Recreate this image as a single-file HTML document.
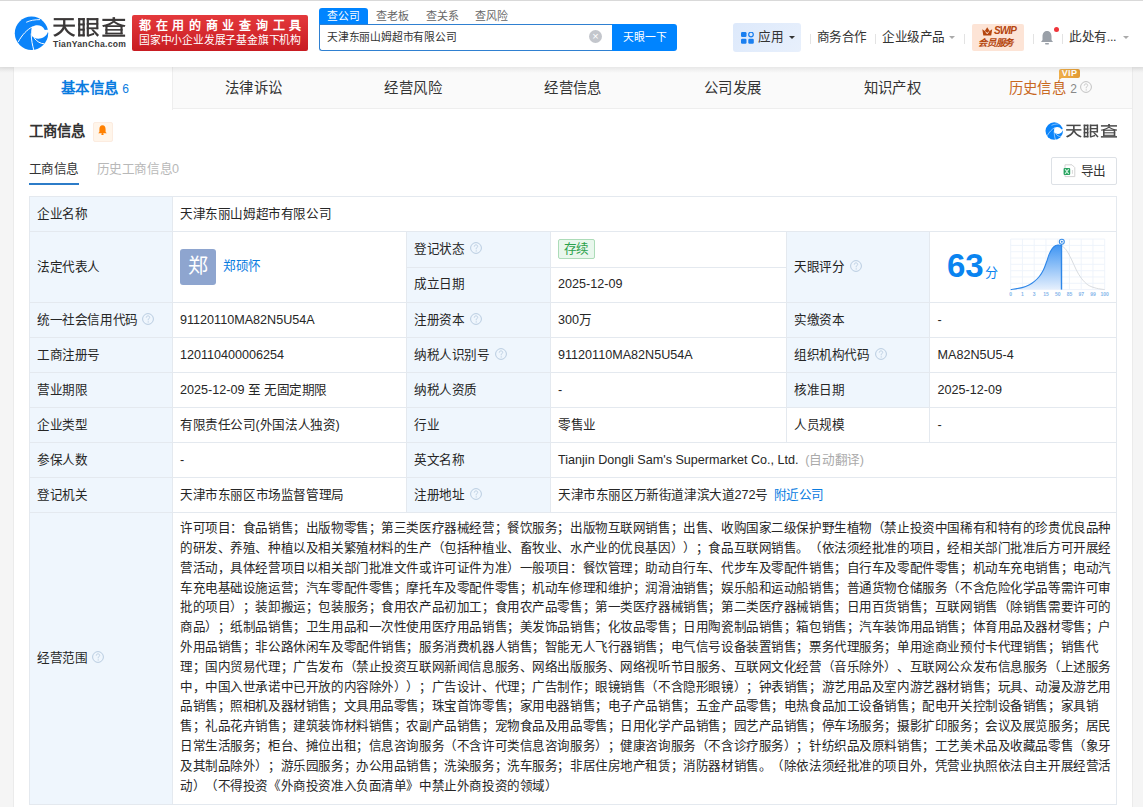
<!DOCTYPE html><html lang="zh-CN"><head><meta charset="utf-8"><style>
*{margin:0;padding:0;box-sizing:border-box;text-spacing-trim:space-all}
html,body{width:1143px;height:807px;overflow:hidden;background:#f5f5f5;font-family:"Liberation Sans", sans-serif;color:#333}
.a{position:absolute;white-space:nowrap}
.hdr{position:absolute;left:0;top:0;width:1143px;height:67px;background:#fff;border-top:1px solid #d9d9d9;box-shadow:0 1px 4px rgba(0,0,0,.06)}
.card{position:absolute;left:13px;top:67px;width:1120px;height:760px;background:#fff;border-left:1px solid #ebebeb;border-right:1px solid #ebebeb}
.t{font-size:12.6px;line-height:16px;color:#222}
.help{position:absolute;width:12px;height:12px} .help svg{display:block}
</style></head><body>
<div class="hdr"></div>
<svg class="a" style="left:12px;top:14px" width="40" height="40" viewBox="0 0 40 40"><circle cx="19.5" cy="19.2" r="16.7" fill="#0b84fa"/>
<path d="M20 13 C23.5 10.3 30 10.2 32.8 15.9 L40 15.2 L40 18.3 L35.8 18.3 C34 23.5 27.5 26.2 22.6 24 C20.6 23 19.3 21.6 19.2 19.8 C19.1 17 19.4 14.6 20 13 Z" fill="#fff"/>
<path d="M6.2 27.9 C10 21 15 15.5 20.6 12.8" stroke="#fff" stroke-width="1" fill="none"/>
<path d="M19.2 19.5 C19.3 26 20.4 31 21.9 36.5" stroke="#fff" stroke-width="1" fill="none"/>
<path d="M22.3 24.2 C25 27.6 28.5 29.6 32 29.8" stroke="#fff" stroke-width="1" fill="none"/>
<path d="M14.2 8.3 C18 6.4 23 5.6 28 5.6" stroke="#fff" stroke-width="0.9" fill="none"/></svg>
<svg class="a" style="left:48px;top:12px" width="82" height="38" viewBox="0 0 1143 530"><g fill="#3b3838">
<rect x="80" y="85" width="280" height="30"/><rect x="75" y="175" width="300" height="30"/><rect x="210" y="100" width="32" height="90"/>
<path d="M208 195 L242 195 C230 260 170 320 95 345 L72 318 C140 295 195 250 208 195Z"/>
<path d="M214 200 L246 200 C260 250 310 295 378 318 L360 345 C285 320 228 265 214 200Z"/>
<rect x="420" y="85" width="30" height="255"/><rect x="482" y="85" width="30" height="255"/>
<rect x="420" y="85" width="92" height="30"/><rect x="420" y="160" width="92" height="28"/><rect x="420" y="232" width="92" height="28"/><rect x="420" y="310" width="92" height="30"/>
<rect x="540" y="85" width="30" height="255"/><rect x="540" y="85" width="160" height="30"/><rect x="672" y="85" width="30" height="155"/>
<rect x="540" y="152" width="160" height="26"/><rect x="540" y="214" width="160" height="26"/>
<path d="M598 240 L632 240 L712 322 L688 345Z"/><path d="M548 322 L640 290 L645 318 L556 345Z"/>
<rect x="758" y="95" width="317" height="30"/><rect x="900" y="72" width="35" height="50"/>
<path d="M905 125 L935 132 C900 170 840 195 768 210 L755 185 C820 172 875 152 905 125Z"/>
<path d="M930 125 L900 132 C935 170 995 195 1067 210 L1080 185 C1015 172 960 152 930 125Z"/>
<rect x="800" y="185" width="30" height="125"/><rect x="1010" y="185" width="30" height="125"/>
<rect x="800" y="185" width="240" height="24"/><rect x="800" y="238" width="240" height="22"/><rect x="800" y="288" width="240" height="22"/>
<rect x="758" y="315" width="317" height="30"/></g></svg>
<div class="a" style="left:53px;top:39px;font-size:8.6px;line-height:10px;font-weight:bold;color:#3a3a3a;letter-spacing:0.3px">TianYanCha.com</div>
<div class="a" style="left:132px;top:15px;width:176px;height:36px;border-radius:2px;background:linear-gradient(#e4393c,#c81c22)"></div>
<div class="a" style="left:139px;top:19px;font-size:12px;line-height:14px;font-weight:bold;color:#fff;letter-spacing:4.7px">都在用的商业查询工具</div>
<div class="a" style="left:139px;top:33px;font-size:10.8px;line-height:14px;color:#fff;letter-spacing:-0.2px">国家中小企业发展子基金旗下机构</div>
<div class="a" style="left:319px;top:8px;width:49px;height:16px;background:#0084ff;border-radius:3px 3px 0 0"></div>
<div class="a" style="left:327px;top:8px;font-size:10.8px;line-height:16px;color:#fff;letter-spacing:0px">查公司</div>
<div class="a" style="left:376px;top:8px;font-size:11px;line-height:16px;color:#666">查老板</div>
<div class="a" style="left:426px;top:8px;font-size:11px;line-height:16px;color:#666">查关系</div>
<div class="a" style="left:475px;top:8px;font-size:11px;line-height:16px;color:#666">查风险</div>
<div class="a" style="left:319px;top:24px;width:295px;height:27px;border:1px solid #2f80d1;border-right:none;border-radius:0 0 0 3px;background:#fff"></div>
<div class="a" style="left:327px;top:29px;font-size:10.8px;line-height:16px;color:#333;letter-spacing:-0.2px">天津东丽山姆超市有限公司</div>
<div class="a" style="left:589px;top:29.5px;width:13px;height:13px;border-radius:50%;background:#c3c6cc;color:#fff;font-size:11px;line-height:13px;text-align:center">&#215;</div>
<div class="a" style="left:612px;top:24px;width:65px;height:27px;background:#0084ff;border-radius:0 3px 3px 0"></div>
<div class="a" style="left:623px;top:29px;font-size:10.8px;line-height:16px;color:#fff;letter-spacing:-0.1px">天眼一下</div>
<div class="a" style="left:733px;top:23px;width:68px;height:29px;border-radius:3px;background:linear-gradient(135deg,#dde9fb,#e8f0fc)"></div>
<svg class="a" style="left:741px;top:32px" width="13" height="12" viewBox="0 0 13 12">
<rect x="0" y="0" width="5.5" height="5" rx="1.2" fill="#1a7ff0"/><circle cx="10" cy="2.5" r="2.3" fill="none" stroke="#1a7ff0" stroke-width="1.2"/>
<rect x="0" y="6.8" width="5.5" height="5" rx="1.2" fill="#1a7ff0"/><rect x="7.3" y="6.8" width="5.5" height="5" rx="1.2" fill="#1a7ff0"/></svg>
<div class="a" style="left:758px;top:29px;font-size:12.6px;line-height:16px;color:#333;letter-spacing:-0.4px">应用</div>
<div class="a" style="left:788.5px;top:35.5px;width:0;height:0;border-left:3px solid transparent;border-right:3px solid transparent;border-top:3.5px solid #333"></div>
<div class="a" style="left:809.5px;top:34px;width:1px;height:10px;background:#e3e3e3"></div>
<div class="a" style="left:874.5px;top:34px;width:1px;height:10px;background:#e3e3e3"></div>
<div class="a" style="left:964px;top:34px;width:1px;height:10px;background:#e3e3e3"></div>
<div class="a" style="left:1032.5px;top:34px;width:1px;height:10px;background:#e3e3e3"></div>
<div class="a" style="left:1061.5px;top:34px;width:1px;height:10px;background:#e3e3e3"></div>
<div class="a" style="left:816.5px;top:29px;font-size:12.6px;line-height:16px;color:#333;letter-spacing:-0.4px">商务合作</div>
<div class="a" style="left:882px;top:29px;font-size:12.6px;line-height:16px;color:#333;letter-spacing:-0.4px">企业级产品</div>
<div class="a" style="left:949px;top:36px;width:0;height:0;border-left:3px solid transparent;border-right:3px solid transparent;border-top:3.5px solid #aaa"></div>
<div class="a" style="left:972px;top:24px;width:52px;height:27px;border-radius:2px;background:#fde4d6"></div>
<svg class="a" style="left:982px;top:27px" width="10.5" height="9" viewBox="0 0 10.5 9">
<path d="M0.3 2.2 L2.8 4 L5.2 0.3 L7.6 4 L10.2 2.2 L9.2 8.6 L1.3 8.6 Z" fill="#b5460f"/>
<path d="M3.6 4.6 L5.2 6.8 L6.8 4.6" stroke="#fde5d9" stroke-width="1" fill="none"/></svg>
<div class="a" style="left:994px;top:25px;font-size:10px;line-height:12px;color:#b5460f;font-weight:bold;font-style:italic;letter-spacing:-0.9px">SWIP</div>
<div class="a" style="left:978px;top:37px;font-size:9.4px;line-height:12px;color:#b5460f;font-weight:bold;font-style:italic;letter-spacing:-0.2px">会员服务</div>
<svg class="a" style="left:1040px;top:30px" width="14" height="15" viewBox="0 0 14 15">
<path d="M7 1 C3.8 1 2.5 3.5 2.5 6.5 L2.5 10 L1 12 L13 12 L11.5 10 L11.5 6.5 C11.5 3.5 10.2 1 7 1Z" fill="#9aa0a8"/>
<rect x="5" y="13" width="4" height="1.5" rx="0.7" fill="#9aa0a8"/></svg>
<div class="a" style="left:1053.5px;top:27px;width:5px;height:5px;border-radius:50%;background:#f0343a"></div>
<div class="a" style="left:1069px;top:29px;font-size:12.6px;line-height:16px;color:#333;letter-spacing:-0.4px">此处有...</div>
<div class="a" style="left:1123px;top:36px;width:0;height:0;border-left:3px solid transparent;border-right:3px solid transparent;border-top:3.5px solid #aaa"></div>
<div class="card"></div>
<div class="a" style="left:14px;top:67px;width:1118px;height:42px;background:#fafafa;border-bottom:1px solid #eee"></div>
<div class="a" style="left:14px;top:67px;width:159px;height:43px;background:#fff;border-right:1px solid #eee"></div>
<div class="a" style="left:61px;top:78.5px;font-size:14.4px;line-height:18px;color:#0a7cdf;font-weight:bold"><span style="letter-spacing:0.3px">基本信息</span> <span style="font-size:12px;font-weight:normal">6</span></div>
<div class="a" style="left:224.7px;top:78.5px;font-size:14.4px;line-height:18px;color:#333;letter-spacing:0.45px">法律诉讼</div>
<div class="a" style="left:384.4px;top:78.5px;font-size:14.4px;line-height:18px;color:#333;letter-spacing:0.45px">经营风险</div>
<div class="a" style="left:544.1px;top:78.5px;font-size:14.4px;line-height:18px;color:#333;letter-spacing:0.45px">经营信息</div>
<div class="a" style="left:703.9px;top:78.5px;font-size:14.4px;line-height:18px;color:#333;letter-spacing:0.45px">公司发展</div>
<div class="a" style="left:863.6px;top:78.5px;font-size:14.4px;line-height:18px;color:#333;letter-spacing:0.45px">知识产权</div>
<div class="a" style="left:1008.5px;top:78.5px;font-size:14.4px;line-height:18px;color:#c8681f"><span style="letter-spacing:0.45px">历史信息</span> <span style="font-size:12px;color:#888">2</span></div>
<div class="help" style="left:1079.5px;top:80.5px"><svg width="12" height="12" viewBox="0 0 12 12"><circle cx="6" cy="6" r="5.4" fill="none" stroke="#c2c2c2" stroke-width="1"/><path d="M4.3 4.6 C4.3 3.5 5 2.9 6 2.9 C7 2.9 7.7 3.5 7.7 4.4 C7.7 5.4 6.2 5.6 6.2 6.9 L6.2 7.3" fill="none" stroke="#c2c2c2" stroke-width="0.9"/><circle cx="6.2" cy="8.9" r="0.6" fill="#c2c2c2"/></svg></div>
<div class="a" style="left:1059px;top:69px;width:21px;height:9px;border-radius:2px 2px 2px 0;background:linear-gradient(90deg,#f0b04a,#e29a33);color:#fff;font-size:9px;line-height:9.5px;font-weight:bold;text-align:center;letter-spacing:0.3px">VIP</div>
<div class="a" style="left:1059px;top:77px;width:0;height:0;border-top:3px solid #eea843;border-right:4px solid transparent"></div>
<div class="a" style="left:0;top:67px;width:1143px;height:6px;background:linear-gradient(rgba(0,0,0,0.075),rgba(0,0,0,0))"></div>
<div class="a" style="left:28.5px;top:122px;font-size:14.4px;line-height:18px;font-weight:bold;color:#333">工商信息</div>
<div class="a" style="left:93px;top:122px;width:20px;height:20px;border:1px solid #fcece0;background:#fff5ea;border-radius:2px"></div>
<svg class="a" style="left:98.4px;top:124.6px" width="9" height="10.5" viewBox="0 0 9 10.5">
<path d="M4.5 0.3 C2.2 0.3 1.4 2.2 1.4 4.4 L1.4 6.9 L0.2 8.3 L8.8 8.3 L7.6 6.9 L7.6 4.4 C7.6 2.2 6.8 0.3 4.5 0.3 Z" fill="#ff8000"/>
<circle cx="4.5" cy="9.2" r="1.1" fill="#ff8000"/></svg>
<svg class="a" style="left:1044px;top:120.5px" width="21" height="21" viewBox="0 0 40 40"><circle cx="19.5" cy="19.2" r="16.7" fill="#0b84fa"/>
<path d="M20 13 C23.5 10.3 30 10.2 32.8 15.9 L40 15.2 L40 18.3 L35.8 18.3 C34 23.5 27.5 26.2 22.6 24 C20.6 23 19.3 21.6 19.2 19.8 C19.1 17 19.4 14.6 20 13 Z" fill="#fff"/>
<path d="M6.2 27.9 C10 21 15 15.5 20.6 12.8" stroke="#fff" stroke-width="1" fill="none"/>
<path d="M19.2 19.5 C19.3 26 20.4 31 21.9 36.5" stroke="#fff" stroke-width="1" fill="none"/>
<path d="M22.3 24.2 C25 27.6 28.5 29.6 32 29.8" stroke="#fff" stroke-width="1" fill="none"/>
<path d="M14.2 8.3 C18 6.4 23 5.6 28 5.6" stroke="#fff" stroke-width="0.9" fill="none"/></svg>
<svg class="a" style="left:1065.7px;top:124.3px" width="51.3" height="13.6" viewBox="72 72 1008 273" preserveAspectRatio="none"><g fill="#4a4a4a">
<rect x="80" y="85" width="280" height="30"/><rect x="75" y="175" width="300" height="30"/><rect x="210" y="100" width="32" height="90"/>
<path d="M208 195 L242 195 C230 260 170 320 95 345 L72 318 C140 295 195 250 208 195Z"/>
<path d="M214 200 L246 200 C260 250 310 295 378 318 L360 345 C285 320 228 265 214 200Z"/>
<rect x="420" y="85" width="30" height="255"/><rect x="482" y="85" width="30" height="255"/>
<rect x="420" y="85" width="92" height="30"/><rect x="420" y="160" width="92" height="28"/><rect x="420" y="232" width="92" height="28"/><rect x="420" y="310" width="92" height="30"/>
<rect x="540" y="85" width="30" height="255"/><rect x="540" y="85" width="160" height="30"/><rect x="672" y="85" width="30" height="155"/>
<rect x="540" y="152" width="160" height="26"/><rect x="540" y="214" width="160" height="26"/>
<path d="M598 240 L632 240 L712 322 L688 345Z"/><path d="M548 322 L640 290 L645 318 L556 345Z"/>
<rect x="758" y="95" width="317" height="30"/><rect x="900" y="72" width="35" height="50"/>
<path d="M905 125 L935 132 C900 170 840 195 768 210 L755 185 C820 172 875 152 905 125Z"/>
<path d="M930 125 L900 132 C935 170 995 195 1067 210 L1080 185 C1015 172 960 152 930 125Z"/>
<rect x="800" y="185" width="30" height="125"/><rect x="1010" y="185" width="30" height="125"/>
<rect x="800" y="185" width="240" height="24"/><rect x="800" y="238" width="240" height="22"/><rect x="800" y="288" width="240" height="22"/>
<rect x="758" y="315" width="317" height="30"/></g></svg>
<div class="a" style="left:28.5px;top:161px;font-size:12.6px;line-height:16px;color:#333;letter-spacing:-0.4px">工商信息</div>
<div class="a" style="left:29px;top:183px;width:50px;height:2px;background:#2c7cc8"></div>
<div class="a" style="left:96.5px;top:161px;font-size:12.6px;line-height:16px;color:#b8b8b8"><span style="letter-spacing:-0.4px">历史工商信息</span>0</div>
<div class="a" style="left:1051px;top:157px;width:66px;height:28px;border:1px solid #dde1e6;border-radius:2px;background:#fff"></div>
<svg class="a" style="left:1063px;top:164px" width="13" height="14" viewBox="0 0 13 14">
<path d="M2 0.8 L9 0.8 L11.8 3.6 L11.8 12.6 L2 12.6 Z" fill="#fff" stroke="#d2d2d2" stroke-width="1"/>
<rect x="0.6" y="3.9" width="6.6" height="7.2" rx="1.1" fill="#27a05e"/>
<path d="M2.1 5.2 L5.7 9.8 M5.7 5.2 L2.1 9.8" stroke="#c9f3da" stroke-width="1.2"/>
<rect x="8.9" y="6" width="1.1" height="3.8" fill="#dcdcdc"/></svg>
<div class="a" style="left:1080.5px;top:163px;font-size:12.6px;line-height:16px;color:#333;letter-spacing:-0.4px">导出</div>
<div class="a" style="left:29px;top:196px;width:143px;height:608px;background:#eff6fd"></div>
<div class="a" style="left:406px;top:231px;width:144px;height:281px;background:#eff6fd"></div>
<div class="a" style="left:786px;top:231px;width:143px;height:176px;background:#eff6fd"></div>
<div class="a" style="left:29px;top:196px;width:1088px;height:1px;background:#e4e9ef"></div>
<div class="a" style="left:29px;top:231px;width:1088px;height:1px;background:#e4e9ef"></div>
<div class="a" style="left:406px;top:266.5px;width:380px;height:1px;background:#e4e9ef"></div>
<div class="a" style="left:29px;top:302px;width:1088px;height:1px;background:#e4e9ef"></div>
<div class="a" style="left:29px;top:337px;width:1088px;height:1px;background:#e4e9ef"></div>
<div class="a" style="left:29px;top:372px;width:1088px;height:1px;background:#e4e9ef"></div>
<div class="a" style="left:29px;top:407px;width:1088px;height:1px;background:#e4e9ef"></div>
<div class="a" style="left:29px;top:442px;width:1088px;height:1px;background:#e4e9ef"></div>
<div class="a" style="left:29px;top:477px;width:1088px;height:1px;background:#e4e9ef"></div>
<div class="a" style="left:29px;top:512px;width:1088px;height:1px;background:#e4e9ef"></div>
<div class="a" style="left:29px;top:804px;width:1088px;height:1px;background:#e4e9ef"></div>
<div class="a" style="left:29px;top:196px;width:1px;height:608px;background:#e4e9ef"></div>
<div class="a" style="left:172px;top:196px;width:1px;height:608px;background:#e4e9ef"></div>
<div class="a" style="left:1116px;top:196px;width:1px;height:609px;background:#e4e9ef"></div>
<div class="a" style="left:406px;top:231px;width:1px;height:281px;background:#e4e9ef"></div>
<div class="a" style="left:550px;top:231px;width:1px;height:281px;background:#e4e9ef"></div>
<div class="a" style="left:786px;top:231px;width:1px;height:211px;background:#e4e9ef"></div>
<div class="a" style="left:929px;top:231px;width:1px;height:211px;background:#e4e9ef"></div>
<div class="a t" style="left:37px;top:205.5px;color:#262626;"><span style="letter-spacing:-0.4px">企业名称</span></div>
<div class="a t" style="left:180px;top:205.5px;color:#262626;"><span style="letter-spacing:-0.4px">天津东丽山姆超市有限公司</span></div>
<div class="a t" style="left:37px;top:258.5px"><span style="letter-spacing:-0.4px">法定代表人</span></div>
<div class="a" style="left:180px;top:249px;width:36px;height:36px;border-radius:3px;background:#8ea5cf;color:#fff;font-size:20px;line-height:34px;text-align:center">郑</div>
<div class="a t" style="left:223px;top:257.5px;color:#0a7cdf"><span style="letter-spacing:-0.4px">郑硕怀</span></div>
<div class="a t" style="left:414px;top:240.8px;color:#262626;"><span style="letter-spacing:-0.4px">登记状态</span></div>
<div class="help" style="left:469.5px;top:242.2px"><svg width="12" height="12" viewBox="0 0 12 12"><circle cx="6" cy="6" r="5.4" fill="none" stroke="#b9cce0" stroke-width="1"/><path d="M4.3 4.6 C4.3 3.5 5 2.9 6 2.9 C7 2.9 7.7 3.5 7.7 4.4 C7.7 5.4 6.2 5.6 6.2 6.9 L6.2 7.3" fill="none" stroke="#b9cce0" stroke-width="0.9"/><circle cx="6.2" cy="8.9" r="0.6" fill="#b9cce0"/></svg></div>
<div class="a" style="left:558px;top:239px;width:37px;height:20px;border:1px solid #acdcb8;background:#e9f7ed;border-radius:2px;color:#2ba14b;font-size:12.6px;line-height:18px;text-align:center;letter-spacing:-0.4px">存续</div>
<div class="a t" style="left:414px;top:276.2px;color:#262626;"><span style="letter-spacing:-0.4px">成立日期</span></div>
<div class="a t" style="left:558px;top:276.2px;color:#262626;">2025-12-09</div>
<div class="a t" style="left:794px;top:258.5px"><span style="letter-spacing:-0.4px">天眼评分</span></div>
<div class="help" style="left:849.5px;top:260.0px"><svg width="12" height="12" viewBox="0 0 12 12"><circle cx="6" cy="6" r="5.4" fill="none" stroke="#b9cce0" stroke-width="1"/><path d="M4.3 4.6 C4.3 3.5 5 2.9 6 2.9 C7 2.9 7.7 3.5 7.7 4.4 C7.7 5.4 6.2 5.6 6.2 6.9 L6.2 7.3" fill="none" stroke="#b9cce0" stroke-width="0.9"/><circle cx="6.2" cy="8.9" r="0.6" fill="#b9cce0"/></svg></div>
<div class="a" style="left:947px;top:247.5px;font-size:33px;line-height:36px;font-weight:bold;color:#0a84f0">63</div>
<div class="a" style="left:984.5px;top:263.5px;font-size:13px;line-height:17px;color:#0a84f0">分</div>
<svg class="a" style="left:1005px;top:234px" width="110" height="66" viewBox="0 0 110 66">
<defs><linearGradient id="g1" x1="0" y1="0" x2="0" y2="1"><stop offset="0" stop-color="#3f95f3"/><stop offset="1" stop-color="#e6f0fd"/></linearGradient></defs>
<line x1="5.70" y1="5.1" x2="5.70" y2="55.6" stroke="#edf3fb" stroke-width="0.9"/><line x1="17.45" y1="5.1" x2="17.45" y2="55.6" stroke="#edf3fb" stroke-width="0.9"/><line x1="29.20" y1="5.1" x2="29.20" y2="55.6" stroke="#edf3fb" stroke-width="0.9"/><line x1="40.95" y1="5.1" x2="40.95" y2="55.6" stroke="#edf3fb" stroke-width="0.9"/><line x1="52.70" y1="5.1" x2="52.70" y2="55.6" stroke="#edf3fb" stroke-width="0.9"/><line x1="64.45" y1="5.1" x2="64.45" y2="55.6" stroke="#edf3fb" stroke-width="0.9"/><line x1="76.20" y1="5.1" x2="76.20" y2="55.6" stroke="#edf3fb" stroke-width="0.9"/><line x1="87.95" y1="5.1" x2="87.95" y2="55.6" stroke="#edf3fb" stroke-width="0.9"/><line x1="99.70" y1="5.1" x2="99.70" y2="55.6" stroke="#edf3fb" stroke-width="0.9"/><line x1="5.7" y1="5.10" x2="99.7" y2="5.10" stroke="#edf3fb" stroke-width="0.9"/><line x1="5.7" y1="11.41" x2="99.7" y2="11.41" stroke="#edf3fb" stroke-width="0.9"/><line x1="5.7" y1="17.72" x2="99.7" y2="17.72" stroke="#edf3fb" stroke-width="0.9"/><line x1="5.7" y1="24.03" x2="99.7" y2="24.03" stroke="#edf3fb" stroke-width="0.9"/><line x1="5.7" y1="30.34" x2="99.7" y2="30.34" stroke="#edf3fb" stroke-width="0.9"/><line x1="5.7" y1="36.65" x2="99.7" y2="36.65" stroke="#edf3fb" stroke-width="0.9"/><line x1="5.7" y1="42.96" x2="99.7" y2="42.96" stroke="#edf3fb" stroke-width="0.9"/><line x1="5.7" y1="49.27" x2="99.7" y2="49.27" stroke="#edf3fb" stroke-width="0.9"/><line x1="5.7" y1="55.58" x2="99.7" y2="55.58" stroke="#edf3fb" stroke-width="0.9"/>
<path d="M5.70 55.60 C7.60 55.27 13.97 54.42 17.10 53.60 C20.23 52.78 22.45 51.73 24.50 50.70 C26.55 49.67 27.77 48.77 29.40 47.40 C31.03 46.03 32.80 44.40 34.30 42.50 C35.80 40.60 37.18 38.45 38.40 36.00 C39.62 33.55 40.65 30.40 41.60 27.80 C42.55 25.20 43.13 22.65 44.10 20.40 C45.07 18.15 46.30 15.80 47.40 14.30 C48.50 12.80 49.62 11.95 50.70 11.40 C51.78 10.85 52.88 10.93 53.90 11.00 C54.92 11.07 56.32 11.67 56.80 11.80 L56.50 55.6 L5.7 55.6 Z" fill="url(#g1)"/>
<path d="M56.80 11.80 C57.55 12.50 59.72 13.80 61.30 16.00 C62.88 18.20 64.63 21.68 66.30 25.00 C67.97 28.32 69.63 32.70 71.30 35.90 C72.97 39.10 74.37 41.70 76.30 44.20 C78.23 46.70 80.42 49.23 82.90 50.90 C85.38 52.57 88.40 53.42 91.20 54.20 C94.00 54.98 98.28 55.37 99.70 55.60" fill="none" stroke="#d5d8dd" stroke-width="0.9"/>
<path d="M5.70 55.60 C7.60 55.27 13.97 54.42 17.10 53.60 C20.23 52.78 22.45 51.73 24.50 50.70 C26.55 49.67 27.77 48.77 29.40 47.40 C31.03 46.03 32.80 44.40 34.30 42.50 C35.80 40.60 37.18 38.45 38.40 36.00 C39.62 33.55 40.65 30.40 41.60 27.80 C42.55 25.20 43.13 22.65 44.10 20.40 C45.07 18.15 46.30 15.80 47.40 14.30 C48.50 12.80 49.62 11.95 50.70 11.40 C51.78 10.85 52.88 10.93 53.90 11.00 C54.92 11.07 56.32 11.67 56.80 11.80" fill="none" stroke="#2d86e8" stroke-width="1.1"/>
<line x1="56.50" y1="9.1" x2="56.50" y2="55.6" stroke="#2d86e8" stroke-width="1.4"/>
<circle cx="56.80" cy="7.8" r="2.5" fill="#fff" stroke="#3a8ee8" stroke-width="1.1"/>
<circle cx="56.80" cy="7.8" r="1" fill="#3a8ee8"/>
<text x="5.70" y="62.3" font-size="5" fill="#86b6ea" text-anchor="middle" font-family="Liberation Sans" font-weight="bold">0</text><text x="17.45" y="62.3" font-size="5" fill="#86b6ea" text-anchor="middle" font-family="Liberation Sans" font-weight="bold">1</text><text x="29.20" y="62.3" font-size="5" fill="#86b6ea" text-anchor="middle" font-family="Liberation Sans" font-weight="bold">3</text><text x="40.95" y="62.3" font-size="5" fill="#86b6ea" text-anchor="middle" font-family="Liberation Sans" font-weight="bold">15</text><text x="52.70" y="62.3" font-size="5" fill="#86b6ea" text-anchor="middle" font-family="Liberation Sans" font-weight="bold">50</text><text x="64.45" y="62.3" font-size="5" fill="#86b6ea" text-anchor="middle" font-family="Liberation Sans" font-weight="bold">85</text><text x="76.20" y="62.3" font-size="5" fill="#86b6ea" text-anchor="middle" font-family="Liberation Sans" font-weight="bold">97</text><text x="87.95" y="62.3" font-size="5" fill="#86b6ea" text-anchor="middle" font-family="Liberation Sans" font-weight="bold">99</text><text x="99.70" y="62.3" font-size="5" fill="#86b6ea" text-anchor="middle" font-family="Liberation Sans" font-weight="bold">100</text>
</svg>
<div class="a t" style="left:37px;top:311.5px;color:#262626;"><span style="letter-spacing:-0.4px">统一社会信用代码</span></div>
<div class="help" style="left:142px;top:313.0px"><svg width="12" height="12" viewBox="0 0 12 12"><circle cx="6" cy="6" r="5.4" fill="none" stroke="#b9cce0" stroke-width="1"/><path d="M4.3 4.6 C4.3 3.5 5 2.9 6 2.9 C7 2.9 7.7 3.5 7.7 4.4 C7.7 5.4 6.2 5.6 6.2 6.9 L6.2 7.3" fill="none" stroke="#b9cce0" stroke-width="0.9"/><circle cx="6.2" cy="8.9" r="0.6" fill="#b9cce0"/></svg></div>
<div class="a t" style="left:180px;top:311.5px;color:#262626;">91120110MA82N5U54A</div>
<div class="a t" style="left:414px;top:311.5px;color:#262626;"><span style="letter-spacing:-0.4px">注册资本</span></div>
<div class="help" style="left:469.5px;top:313.0px"><svg width="12" height="12" viewBox="0 0 12 12"><circle cx="6" cy="6" r="5.4" fill="none" stroke="#b9cce0" stroke-width="1"/><path d="M4.3 4.6 C4.3 3.5 5 2.9 6 2.9 C7 2.9 7.7 3.5 7.7 4.4 C7.7 5.4 6.2 5.6 6.2 6.9 L6.2 7.3" fill="none" stroke="#b9cce0" stroke-width="0.9"/><circle cx="6.2" cy="8.9" r="0.6" fill="#b9cce0"/></svg></div>
<div class="a t" style="left:558px;top:311.5px;color:#262626;">300<span style="letter-spacing:-0.4px">万</span></div>
<div class="a t" style="left:794px;top:311.5px;color:#262626;"><span style="letter-spacing:-0.4px">实缴资本</span></div>
<div class="a t" style="left:937.5px;top:311.5px;color:#262626;">-</div>
<div class="a t" style="left:37px;top:346.5px;color:#262626;"><span style="letter-spacing:-0.4px">工商注册号</span></div>
<div class="a t" style="left:180px;top:346.5px;color:#262626;">120110400006254</div>
<div class="a t" style="left:414px;top:346.5px;color:#262626;"><span style="letter-spacing:-0.4px">纳税人识别号</span></div>
<div class="help" style="left:495px;top:348.0px"><svg width="12" height="12" viewBox="0 0 12 12"><circle cx="6" cy="6" r="5.4" fill="none" stroke="#b9cce0" stroke-width="1"/><path d="M4.3 4.6 C4.3 3.5 5 2.9 6 2.9 C7 2.9 7.7 3.5 7.7 4.4 C7.7 5.4 6.2 5.6 6.2 6.9 L6.2 7.3" fill="none" stroke="#b9cce0" stroke-width="0.9"/><circle cx="6.2" cy="8.9" r="0.6" fill="#b9cce0"/></svg></div>
<div class="a t" style="left:558px;top:346.5px;color:#262626;">91120110MA82N5U54A</div>
<div class="a t" style="left:794px;top:346.5px;color:#262626;"><span style="letter-spacing:-0.4px">组织机构代码</span></div>
<div class="help" style="left:874.5px;top:348.0px"><svg width="12" height="12" viewBox="0 0 12 12"><circle cx="6" cy="6" r="5.4" fill="none" stroke="#b9cce0" stroke-width="1"/><path d="M4.3 4.6 C4.3 3.5 5 2.9 6 2.9 C7 2.9 7.7 3.5 7.7 4.4 C7.7 5.4 6.2 5.6 6.2 6.9 L6.2 7.3" fill="none" stroke="#b9cce0" stroke-width="0.9"/><circle cx="6.2" cy="8.9" r="0.6" fill="#b9cce0"/></svg></div>
<div class="a t" style="left:937.5px;top:346.5px;color:#262626;">MA82N5U5-4</div>
<div class="a t" style="left:37px;top:381.5px;color:#262626;"><span style="letter-spacing:-0.4px">营业期限</span></div>
<div class="a t" style="left:180px;top:381.5px;color:#262626;">2025-12-09 <span style="letter-spacing:-0.4px">至</span> <span style="letter-spacing:-0.4px">无固定期限</span></div>
<div class="a t" style="left:414px;top:381.5px;color:#262626;"><span style="letter-spacing:-0.4px">纳税人资质</span></div>
<div class="a t" style="left:558px;top:381.5px;color:#262626;">-</div>
<div class="a t" style="left:794px;top:381.5px;color:#262626;"><span style="letter-spacing:-0.4px">核准日期</span></div>
<div class="a t" style="left:937.5px;top:381.5px;color:#262626;">2025-12-09</div>
<div class="a t" style="left:37px;top:416.5px;color:#262626;"><span style="letter-spacing:-0.4px">企业类型</span></div>
<div class="a t" style="left:180px;top:416.5px;color:#262626;"><span style="letter-spacing:-0.4px">有限责任公司</span>(<span style="letter-spacing:-0.4px">外国法人独资</span>)</div>
<div class="a t" style="left:414px;top:416.5px;color:#262626;"><span style="letter-spacing:-0.4px">行业</span></div>
<div class="a t" style="left:558px;top:416.5px;color:#262626;"><span style="letter-spacing:-0.4px">零售业</span></div>
<div class="a t" style="left:794px;top:416.5px;color:#262626;"><span style="letter-spacing:-0.4px">人员规模</span></div>
<div class="a t" style="left:937.5px;top:416.5px;color:#262626;">-</div>
<div class="a t" style="left:37px;top:451.5px;color:#262626;"><span style="letter-spacing:-0.4px">参保人数</span></div>
<div class="a t" style="left:180px;top:451.5px;color:#262626;">-</div>
<div class="a t" style="left:414px;top:451.5px;color:#262626;"><span style="letter-spacing:-0.4px">英文名称</span></div>
<div class="a t" style="left:558px;top:451.5px;color:#262626;">Tianjin Dongli Sam's Supermarket Co., Ltd. <span style='color:#aaa;margin-left:3px'>(<span style="letter-spacing:-0.4px">自动翻译</span>)</span></div>
<div class="a t" style="left:37px;top:486.5px;color:#262626;"><span style="letter-spacing:-0.4px">登记机关</span></div>
<div class="a t" style="left:180px;top:486.5px;color:#262626;"><span style="letter-spacing:-0.4px">天津市东丽区市场监督管理局</span></div>
<div class="a t" style="left:414px;top:486.5px;color:#262626;"><span style="letter-spacing:-0.4px">注册地址</span></div>
<div class="help" style="left:469.5px;top:488.0px"><svg width="12" height="12" viewBox="0 0 12 12"><circle cx="6" cy="6" r="5.4" fill="none" stroke="#b9cce0" stroke-width="1"/><path d="M4.3 4.6 C4.3 3.5 5 2.9 6 2.9 C7 2.9 7.7 3.5 7.7 4.4 C7.7 5.4 6.2 5.6 6.2 6.9 L6.2 7.3" fill="none" stroke="#b9cce0" stroke-width="0.9"/><circle cx="6.2" cy="8.9" r="0.6" fill="#b9cce0"/></svg></div>
<div class="a t" style="left:558px;top:486.5px;color:#262626;"><span style="letter-spacing:-0.4px">天津市东丽区万新街道津滨大道</span>272<span style="letter-spacing:-0.4px">号</span> <span style='color:#0a7cdf;margin-left:2px'><span style="letter-spacing:-0.4px">附近公司</span></span></div>
<div class="a t" style="left:37px;top:650.0px;color:#262626;"><span style="letter-spacing:-0.4px">经营范围</span></div>
<div class="help" style="left:92px;top:650.7px"><svg width="12" height="12" viewBox="0 0 12 12"><circle cx="6" cy="6" r="5.4" fill="none" stroke="#b9cce0" stroke-width="1"/><path d="M4.3 4.6 C4.3 3.5 5 2.9 6 2.9 C7 2.9 7.7 3.5 7.7 4.4 C7.7 5.4 6.2 5.6 6.2 6.9 L6.2 7.3" fill="none" stroke="#b9cce0" stroke-width="0.9"/><circle cx="6.2" cy="8.9" r="0.6" fill="#b9cce0"/></svg></div>
<div class="a" style="left:180px;top:519.20px;font-size:12.54px;line-height:19.8px;color:#262626;letter-spacing:-0.42px">许可项目：食品销售；出版物零售；第三类医疗器械经营；餐饮服务；出版物互联网销售；出售、收购国家二级保护野生植物（禁止投资中国稀有和特有的珍贵优良品种</div>
<div class="a" style="left:180px;top:539.00px;font-size:12.54px;line-height:19.8px;color:#262626;letter-spacing:-0.42px">的研发、养殖、种植以及相关繁殖材料的生产（包括种植业、畜牧业、水产业的优良基因））；食品互联网销售。（依法须经批准的项目，经相关部门批准后方可开展经</div>
<div class="a" style="left:180px;top:558.80px;font-size:12.54px;line-height:19.8px;color:#262626;letter-spacing:-0.42px">营活动，具体经营项目以相关部门批准文件或许可证件为准）一般项目：餐饮管理；助动自行车、代步车及零配件销售；自行车及零配件零售；机动车充电销售；电动汽</div>
<div class="a" style="left:180px;top:578.60px;font-size:12.54px;line-height:19.8px;color:#262626;letter-spacing:-0.42px">车充电基础设施运营；汽车零配件零售；摩托车及零配件零售；机动车修理和维护；润滑油销售；娱乐船和运动船销售；普通货物仓储服务（不含危险化学品等需许可审</div>
<div class="a" style="left:180px;top:598.40px;font-size:12.54px;line-height:19.8px;color:#262626;letter-spacing:-0.42px">批的项目）；装卸搬运；包装服务；食用农产品初加工；食用农产品零售；第一类医疗器械销售；第二类医疗器械销售；日用百货销售；互联网销售（除销售需要许可的</div>
<div class="a" style="left:180px;top:618.20px;font-size:12.54px;line-height:19.8px;color:#262626;letter-spacing:-0.42px">商品）；纸制品销售；卫生用品和一次性使用医疗用品销售；美发饰品销售；化妆品零售；日用陶瓷制品销售；箱包销售；汽车装饰用品销售；体育用品及器材零售；户</div>
<div class="a" style="left:180px;top:638.00px;font-size:12.54px;line-height:19.8px;color:#262626;letter-spacing:-0.42px">外用品销售；非公路休闲车及零配件销售；服务消费机器人销售；智能无人飞行器销售；电气信号设备装置销售；票务代理服务；单用途商业预付卡代理销售；销售代</div>
<div class="a" style="left:180px;top:657.80px;font-size:12.54px;line-height:19.8px;color:#262626;letter-spacing:-0.42px">理；国内贸易代理；广告发布（禁止投资互联网新闻信息服务、网络出版服务、网络视听节目服务、互联网文化经营（音乐除外）、互联网公众发布信息服务（上述服务</div>
<div class="a" style="left:180px;top:677.60px;font-size:12.54px;line-height:19.8px;color:#262626;letter-spacing:-0.42px">中，中国入世承诺中已开放的内容除外））；广告设计、代理；广告制作；眼镜销售（不含隐形眼镜）；钟表销售；游艺用品及室内游艺器材销售；玩具、动漫及游艺用</div>
<div class="a" style="left:180px;top:697.40px;font-size:12.54px;line-height:19.8px;color:#262626;letter-spacing:-0.42px">品销售；照相机及器材销售；文具用品零售；珠宝首饰零售；家用电器销售；电子产品销售；五金产品零售；电热食品加工设备销售；配电开关控制设备销售；家具销</div>
<div class="a" style="left:180px;top:717.20px;font-size:12.54px;line-height:19.8px;color:#262626;letter-spacing:-0.42px">售；礼品花卉销售；建筑装饰材料销售；农副产品销售；宠物食品及用品零售；日用化学产品销售；园艺产品销售；停车场服务；摄影扩印服务；会议及展览服务；居民</div>
<div class="a" style="left:180px;top:737.00px;font-size:12.54px;line-height:19.8px;color:#262626;letter-spacing:-0.42px">日常生活服务；柜台、摊位出租；信息咨询服务（不含许可类信息咨询服务）；健康咨询服务（不含诊疗服务）；针纺织品及原料销售；工艺美术品及收藏品零售（象牙</div>
<div class="a" style="left:180px;top:756.80px;font-size:12.54px;line-height:19.8px;color:#262626;letter-spacing:-0.42px">及其制品除外）；游乐园服务；办公用品销售；洗染服务；洗车服务；非居住房地产租赁；消防器材销售。（除依法须经批准的项目外，凭营业执照依法自主开展经营活</div>
<div class="a" style="left:180px;top:776.60px;font-size:12.54px;line-height:19.8px;color:#262626;letter-spacing:-0.42px">动）（不得投资《外商投资准入负面清单》中禁止外商投资的领域）</div>
</body></html>
